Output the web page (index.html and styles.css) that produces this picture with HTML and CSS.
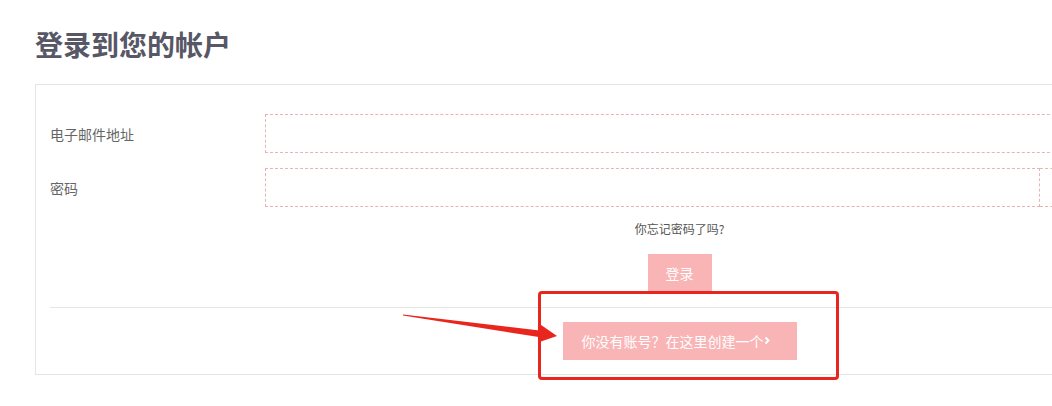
FILE: index.html
```html
<!DOCTYPE html>
<html lang="zh-CN">
<head>
    <meta charset="UTF-8">
    <meta name="viewport" content="width=device-width, initial-scale=1.0">
    <title>登录到您的帐户</title>
    <link rel="stylesheet" href="styles.css">
</head>
<body>
    <div class="page">
        <h1>登录到您的帐户</h1>

        <div class="card">
            <form class="login-form">
                <div class="form-row">
                    <label for="email">电子邮件地址</label>
                    <input type="email" id="email">
                </div>
                <div class="form-row">
                    <label for="password">密码</label>
                    <div class="input-group">
                        <input type="password" id="password">
                        <button type="button" class="show-btn" aria-label="显示"></button>
                    </div>
                </div>

                <div class="forgot">
                    <a href="#">你忘记密码了吗?</a>
                </div>

                <div class="center">
                    <button type="submit" class="btn">登录</button>
                </div>
            </form>

            <hr>

            <div class="center">
                <a href="#" class="btn btn-create">你没有账号？在这里创建一个<svg class="chev" width="14" height="10" viewBox="0 0 14 10"><path d="M1.5 1.5 L4.5 4.5 L1.5 7.5" fill="none" stroke="#fff" stroke-width="2"/></svg></a>
            </div>
        </div>

        <!-- screenshot annotation -->
        <div class="mark-box"></div>
        <svg class="mark-arrow" width="1052" height="406" viewBox="0 0 1052 406">
            <polygon points="403,314.4 539.6,330.4 540.4,324.6 557,336 538,342.6 538.8,337 403,315.6" fill="#e8261e"/>
        </svg>
    </div>
</body>
</html>
```

FILE: styles.css
```css
html, body {
    margin: 0;
    overflow: hidden;
}
body {
    font-family: "Noto Sans CJK SC", "Liberation Sans", sans-serif;
    color: #666;
    background: #fff;
}
.page {
    position: relative;
    padding: 24px 0 0 35px;
    height: 406px;
    box-sizing: border-box;
}
h1 {
    margin: 0 0 20px;
    font-size: 28px;
    line-height: 40px;
    font-weight: 700;
    color: #575766;
}
.card {
    width: 1289px;
    box-sizing: border-box;
    border: 1px solid #e5e5e5;
    padding: 29px 14px 14px;
}
.login-form {
    display: flex;
    flex-direction: column;
}
.form-row {
    display: grid;
    grid-template-columns: 215px 835px;
    align-items: center;
}
.form-row + .form-row {
    margin-top: 15px;
}
.form-row label {
    font-size: 14px;
    color: #666;
}
input {
    height: 39px;
    box-sizing: border-box;
    border: 1px dashed #eab3b3;
    background: #fff;
    outline: none;
    width: 100%;
    margin: 0;
}
.input-group {
    display: flex;
}
.input-group input {
    flex: 1;
    width: auto;
}
.show-btn {
    width: 60px;
    height: 39px;
    box-sizing: border-box;
    border: 1px dashed #eab3b3;
    border-left: none;
    background: #fff;
}
.forgot {
    text-align: center;
    margin-top: 13px;
    font-size: 12px;
    line-height: 18px;
}
.forgot a {
    color: #555;
    text-decoration: none;
}
.center {
    display: flex;
    justify-content: center;
}
.login-form .center {
    margin-top: 16px;
}
.btn {
    display: inline-flex;
    align-items: center;
    height: 38px;
    box-sizing: border-box;
    padding: 0 18px;
    font-family: inherit;
    font-size: 14px;
    color: #fff;
    background-color: #f9b5b5;
    border: none;
    text-decoration: none;
}
.btn-create {
    padding: 0 19px;
}
.chev {
    display: block;
}
hr {
    border: none;
    border-top: 1px solid #e6e6e6;
    margin: 15px 0 14px;
}
.mark-box {
    position: absolute;
    left: 538px;
    top: 291px;
    width: 301px;
    height: 89px;
    box-sizing: border-box;
    border: 3px solid #e8261e;
    border-radius: 4px;
}
.mark-arrow {
    position: absolute;
    left: 0;
    top: 0;
    pointer-events: none;
}
```
